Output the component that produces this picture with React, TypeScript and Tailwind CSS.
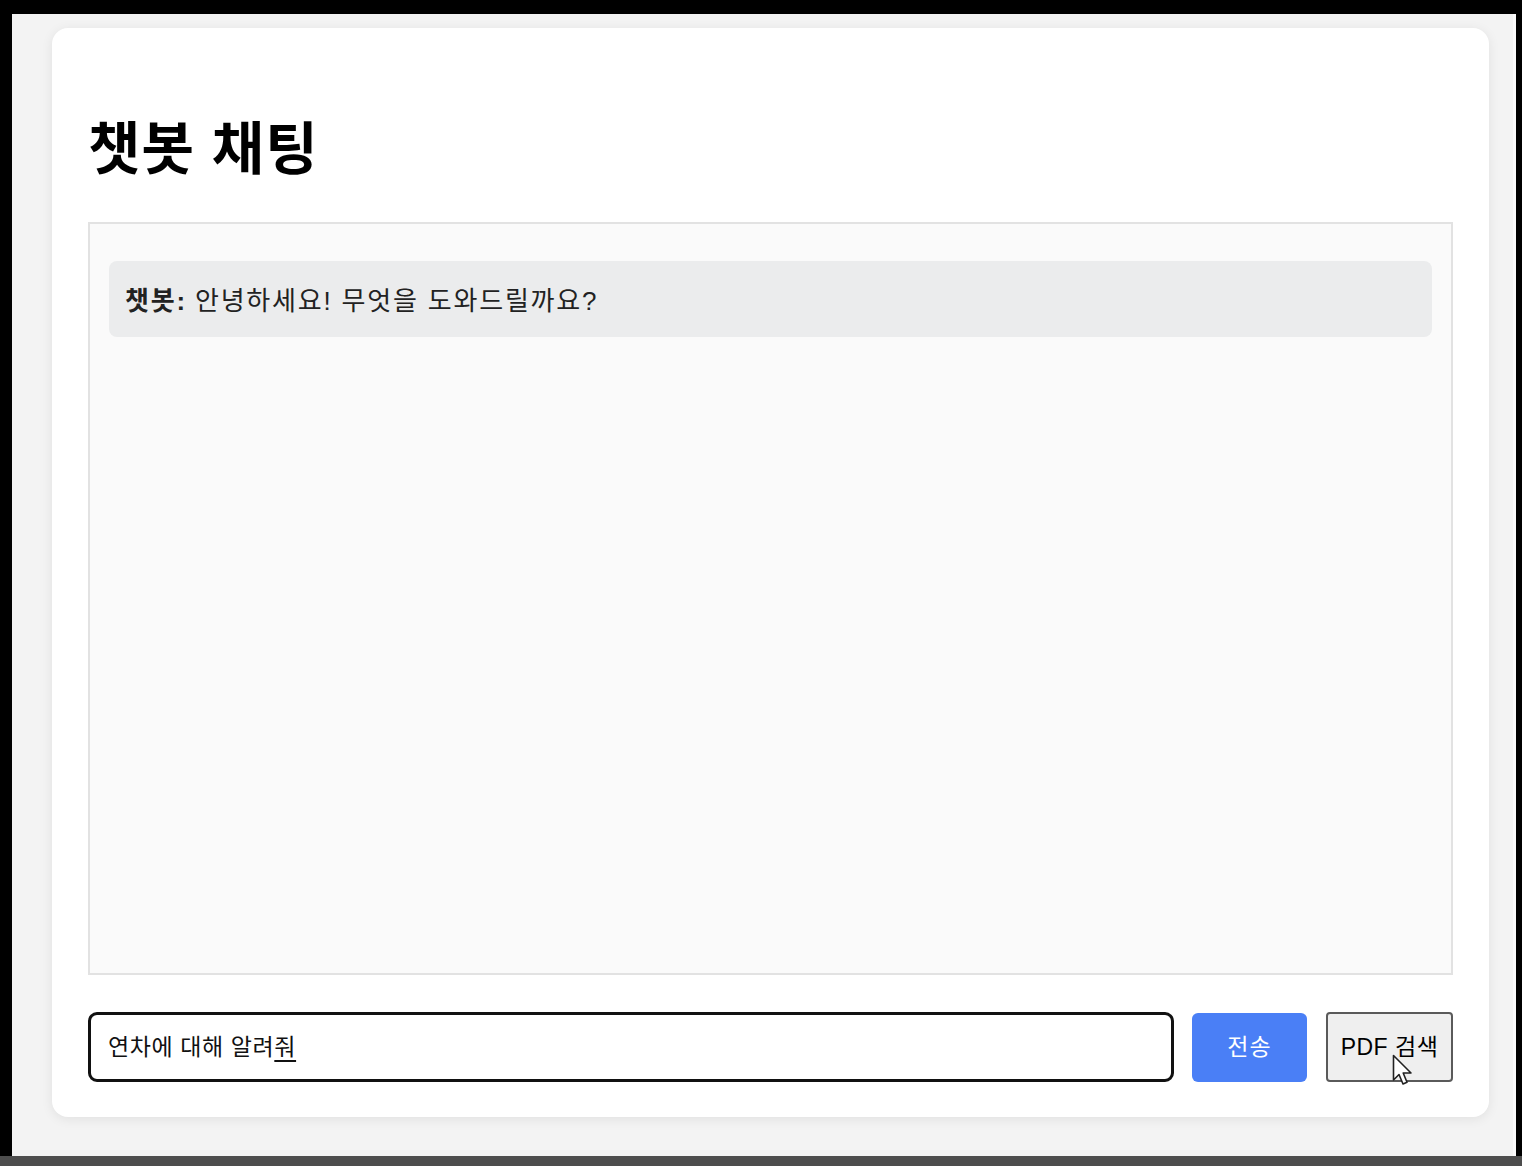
import React from 'react';

const font = { fontFamily: '"Liberation Sans", "Noto Sans CJK KR", sans-serif' };

function Cursor() {
  return (
    <svg
      className="absolute left-[66px] top-[42px] pointer-events-none"
      width="22"
      height="34"
      viewBox="0 0 22 34"
    >
      <path
        d="M1.5 1.5 L1.5 26 L7 20.5 L11 30 L15 28.3 L11.2 19 L19 19 Z"
        fill="#fff"
        stroke="#222"
        strokeWidth="1.6"
        strokeLinejoin="round"
      />
    </svg>
  );
}

export default function App() {
  return (
    <div className="w-[1522px] h-[1166px] bg-black flex flex-col overflow-hidden" style={font}>
      <div className="h-[14px] shrink-0" />
      <div className="flex flex-1 min-h-0">
        <div className="w-[12px] shrink-0" />
        <div className="flex-1 min-w-0 bg-[#f3f3f3] pt-[14px] pl-[40px] border-r-[3px] border-[#fafafa]">
          <div className="w-[1437px] h-[1089px] bg-white rounded-[16px] shadow-[0_2px_12px_rgba(0,0,0,0.08)] px-[36px] pt-[89px] flex flex-col">
            <h1 className="text-[57px] font-bold leading-[64px] text-black tracking-[1px]">챗봇 채팅</h1>

            <div className="mt-[41px] h-[753px] border-2 border-[#e2e2e2] bg-[#fafafa] p-[19px] pt-[37px]">
              <div className="bg-[#ebeced] rounded-[8px] h-[76px] flex items-center pt-[4px] px-[16px] text-[26px] text-[#222] tracking-[1.8px]">
                <span className="font-bold mr-[8px]">챗봇:</span>
                <span>안녕하세요! 무엇을 도와드릴까요?</span>
              </div>
            </div>

            <div className="mt-[37px] flex items-center">
              <div className="flex-1 h-[70px] border-[3px] border-[#111] rounded-[9px] flex items-center px-[17px] text-[23px] text-[#111] tracking-[0.6px]">
                <span>
                  연차에 대해 알려<span className="underline underline-offset-[5px]">줘</span>
                </span>
              </div>
              <button className="ml-[18px] w-[115px] h-[69px] bg-[#4a7ff6] rounded-[6px] text-white text-[23px] tracking-[1px]">
                전송
              </button>
              <div className="relative ml-[19px]">
                <button className="w-[127px] h-[70px] bg-[#efefef] border-2 border-[#5a5a5a] rounded-[4px] text-[23px] text-black tracking-[0.5px]">
                  PDF 검색
                </button>
                <Cursor />
              </div>
            </div>
          </div>
        </div>
        <div className="w-[6px] shrink-0" />
      </div>
      <div className="h-[10px] shrink-0 bg-[#4d4d4d]" />
    </div>
  );
}
